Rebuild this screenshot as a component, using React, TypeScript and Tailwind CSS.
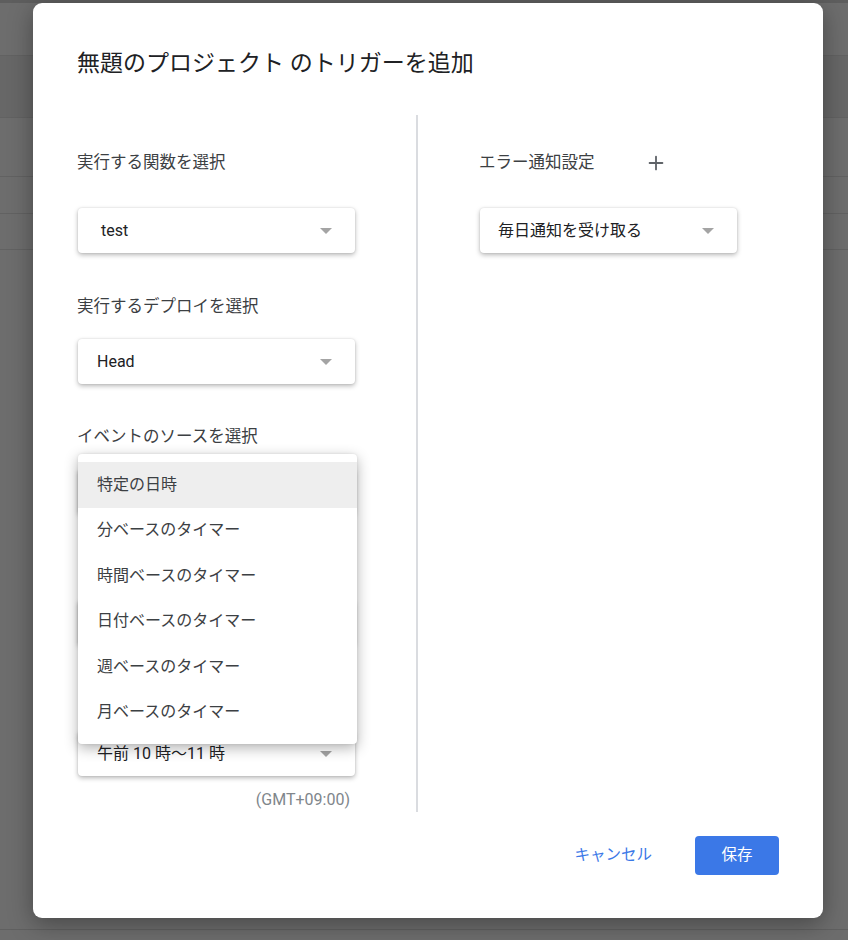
import React from 'react';
import { Plus } from 'lucide-react';

const Caret = () => (
    <svg width="12" height="6" viewBox="0 0 12 6" className="shrink-0">
        <path d="M0 0 L12 0 L6 6 Z" fill="#a4a4a4" />
    </svg>
);

const Select: React.FC<{ value?: string; className?: string }> = ({ value = '', className = '' }) => (
    <div className={`flex items-center justify-between h-[45px] bg-white rounded-[4px] shadow-[0_2px_5px_rgba(0,0,0,0.28),0_0_2px_rgba(0,0,0,0.12)] pl-[19px] pr-[23px] ${className}`}>
        <span className="text-[16px] text-[#202124] whitespace-nowrap">{value}</span>
        <Caret />
    </div>
);

const Label: React.FC<{ children?: React.ReactNode }> = ({ children }) => (
    <div className="h-6 leading-6 text-[16.5px] text-[#3c4043] mb-5 whitespace-nowrap">{children}</div>
);

const menuItems = ['特定の日時', '分ベースのタイマー', '時間ベースのタイマー', '日付ベースのタイマー', '週ベースのタイマー', '月ベースのタイマー'];

export default function App() {
    return (
        <div className="relative h-[940px] w-[848px] overflow-hidden bg-[#6d6d6d] font-['Roboto','Noto_Sans_CJK_JP',sans-serif]">
            {/* page behind the overlay */}
            <div className="absolute inset-0 flex flex-col">
                <div className="h-[3px] bg-[#5e5e5e]" />
                <div className="h-[53px] border-b border-[#626262]" />
                <div className="h-[62px] border-b border-[#626262] bg-[#676767]" />
                <div className="h-[59px] border-b border-[#626262]" />
                <div className="h-[37px] border-b border-[#626262]" />
                <div className="h-[36px] border-b border-[#626262]" />
                <div className="flex-1" />
                <div className="h-[11px] border-t border-[#606060]" />
            </div>

            <div className="relative ml-[33px] mt-[3px] w-[790px] h-[915px] bg-white rounded-[9px] shadow-[0_6px_24px_rgba(0,0,0,0.35)] px-[44px] pt-[45px] flex flex-col">
                <h1 className="h-8 leading-8 text-[23px] text-[#202124] font-normal whitespace-nowrap">無題のプロジェクト のトリガーを追加</h1>

                <div className="mt-[35px] flex h-[697px]">
                    {/* left column */}
                    <div className="w-[341px] pt-[30px] border-r-2 border-[#dadce0] flex flex-col">
                        <div className="h-9 flex items-center text-[16.5px] text-[#3c4043] mb-[27px]">実行する関数を選択</div>
                        <Select value="test" className="w-[277px] ml-px !pl-[23px]" />

                        <div className="mt-[42px]"><Label>実行するデプロイを選択</Label></div>
                        <Select value="Head" className="w-[277px] ml-px" />

                        <div className="mt-[41px]"><Label>イベントのソースを選択</Label></div>
                        <div className="relative">
                            <Select className="w-[277px] ml-px" />

                            <div className="mt-[42px]"><Label /></div>
                            <Select className="w-[277px] ml-px" />

                            <div className="mt-[42px]"><Label /></div>
                            <Select value="午前 10 時〜11 時" className="w-[277px] ml-px" />

                            <div className="w-[273px] text-right mt-[12px] h-6 leading-6 text-[16px] text-[#80868b]">(GMT+09:00)</div>

                            {/* open dropdown menu */}
                            <div className="absolute left-px top-[-15px] w-[279px] bg-white rounded-[4px] shadow-[0_4px_14px_rgba(0,0,0,0.3),0_0_3px_rgba(0,0,0,0.1)] pt-2 pb-[9px] flex flex-col">
                                {menuItems.map((item, i) => (
                                    <div
                                        key={item}
                                        className={`h-[45.5px] flex items-center pl-[19px] text-[16px] text-[#3c4043] whitespace-nowrap ${i === 0 ? 'bg-[#eeeeee]' : ''}`}
                                    >
                                        {item}
                                    </div>
                                ))}
                            </div>
                        </div>
                    </div>

                    {/* right column */}
                    <div className="flex-1 pl-[61px] pt-[30px] flex flex-col">
                        <div className="h-9 flex items-center text-[16.5px] text-[#3c4043] mb-[27px]">
                            <span>エラー通知設定</span>
                            <Plus className="ml-[50px] w-[22px] h-[22px] text-[#5f6368]" strokeWidth={2} />
                        </div>
                        <Select value="毎日通知を受け取る" className="w-[257px] ml-px !pl-[18px]" />
                    </div>
                </div>

                <div className="mt-[24px] flex items-center justify-end">
                    <button className="text-[15.5px] text-[#3b78e7] px-2 mr-[35px] h-[39px]">キャンセル</button>
                    <button className="w-[84px] h-[39px] rounded-[4px] bg-[#3b78e7] text-white text-[15.5px]">保存</button>
                </div>
            </div>
        </div>
    );
}
